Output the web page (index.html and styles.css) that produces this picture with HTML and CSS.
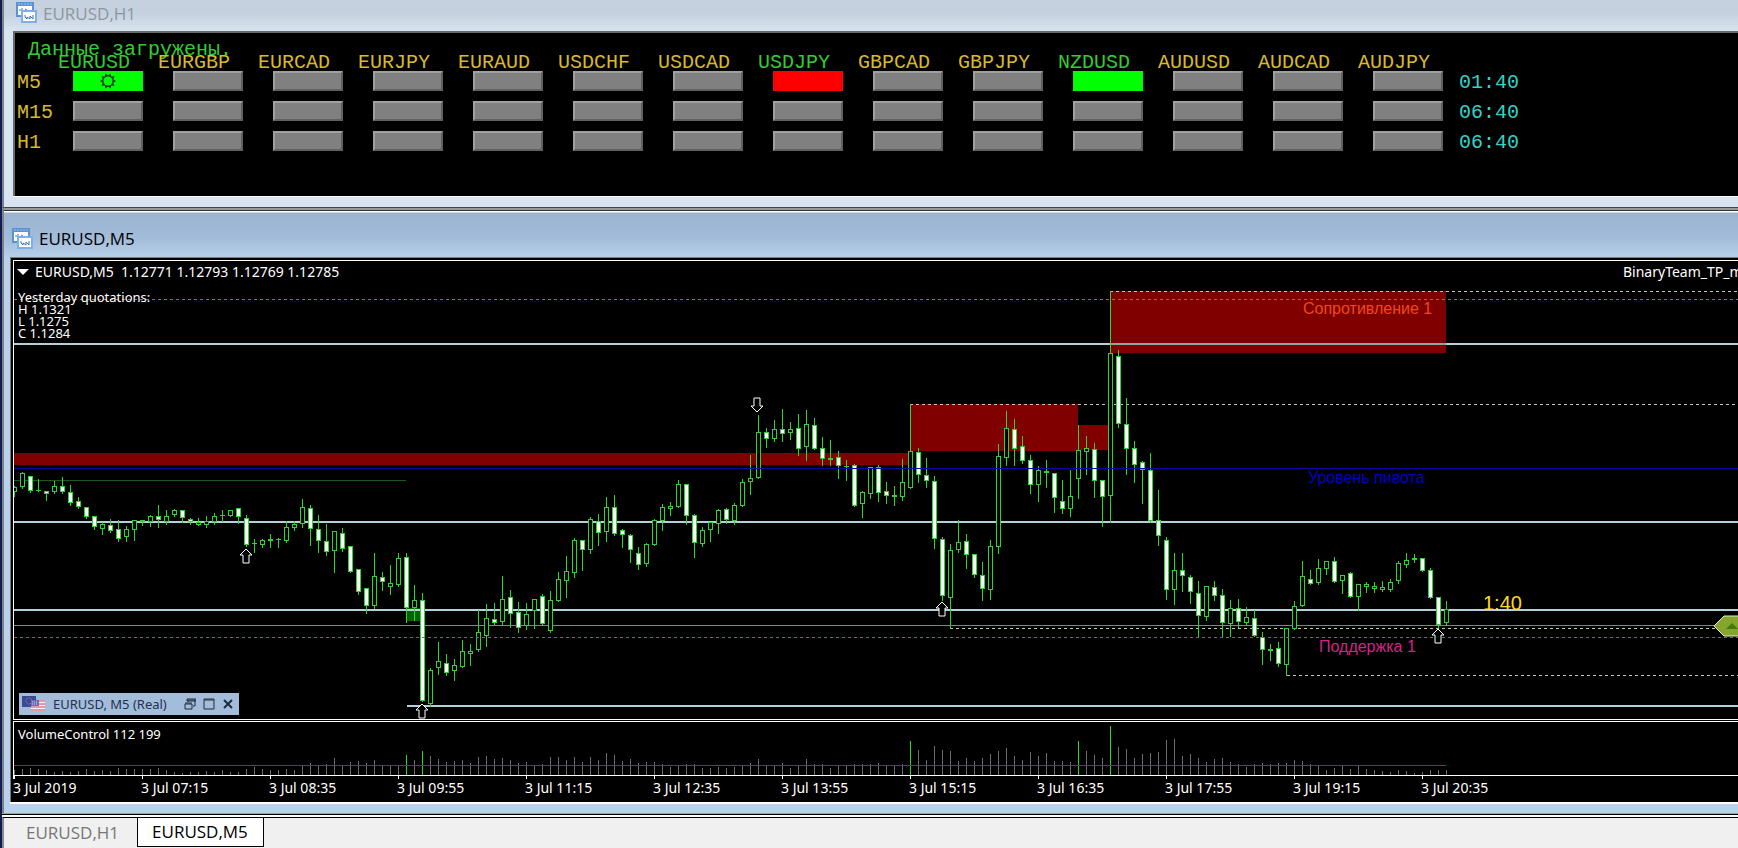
FILE: index.html
```html
<!DOCTYPE html>
<html lang="ru">
<head>
<meta charset="utf-8">
<title>EURUSD,M5</title>
<link rel="stylesheet" href="styles.css">
</head>
<body>
<svg class="defs" aria-hidden="true">
  <symbol id="win-icon" viewBox="0 0 21 21">
    <rect x="1" y="1" width="16" height="13" fill="#fff" stroke="#5b92d6" stroke-width="2"/>
    <rect x="0" y="0" width="18" height="4" fill="#5b92d6"/>
    <path d="M2 2h14" stroke="#9cc4f0" stroke-dasharray="2 1"/>
    <path d="M3 8h2M6 6v3M9 7l2 1" stroke="#3f74c4" fill="none"/>
    <rect x="6" y="9" width="14" height="11" fill="#fff" stroke="#7db0ea" stroke-width="2"/>
    <path d="M5 9h16" stroke="#7db0ea" stroke-width="2"/>
    <path d="M9 13v2l2 2v-2l3 2v-3l3 3v-4" stroke="#3d70c0" fill="none"/>
  </symbol>
</svg>

<main class="desktop">
  <section class="window inactive">
    <header class="titlebar"><svg class="win-icon"><use href="#win-icon"/></svg><h2>EURUSD,H1</h2></header>
    <div class="panel">
      <p class="status">Данные загружены.</p>
      <table class="signals">
        <thead><tr id="pairs"><td></td></tr></thead>
        <tbody id="frames"></tbody>
      </table>
    </div>
  </section>

  <section class="window active">
    <header class="titlebar"><svg class="win-icon"><use href="#win-icon"/></svg><h2>EURUSD,M5</h2></header>
    <div class="chart-frame">
      <div class="price">
        <svg class="price-plot" id="price"></svg>
        <div class="legend">
          <div class="legend-row">
            <svg class="caret" viewBox="0 0 12 6"><path d="M0 0h12L6 6z" fill="#fff"/></svg>
            <span class="ohlc">EURUSD,M5&nbsp; 1.12771 1.12793 1.12769 1.12785</span>
            <span class="expert">BinaryTeam_TP_m</span>
          </div>
          <div class="quotes">
            <div>Yesterday quotations:</div><div>H 1.1321</div><div>L 1.1275</div><div>C 1.1284</div>
          </div>
        </div>
        <div class="mini">
          <svg class="flags" viewBox="0 0 24 16">
            <rect x="0" y="0" width="14" height="11" fill="#3b4a92"/>
            <circle cx="7" cy="5" r="3" fill="none" stroke="#9a9cb8" stroke-dasharray="1 1"/>
            <rect x="9" y="4" width="14" height="11" fill="#f2f2f6"/>
            <path d="M9 5h14M9 8h14M9 11h14M9 14h14" stroke="#d2404e"/>
            <rect x="9" y="4" width="8" height="6" fill="#6a70b4"/>
            <path d="M10 6h6M10 8h6" stroke="#c8cae6" stroke-dasharray="1 1"/>
          </svg>
          <span class="mini-title">EURUSD, M5 (Real)</span>
          <button aria-label="Restore"><svg viewBox="0 0 12 12"><path d="M4 4V2h7v6H9M3 1h9v2H3zM1 6h7v5H1zM1 5h7" /></svg></button>
          <button aria-label="Maximize"><svg viewBox="0 0 12 12"><path d="M1 1h10v10H1zM1 2h10"/></svg></button>
          <button aria-label="Close"><svg viewBox="0 0 12 12"><path class="bold" d="M2 2l8 8M10 2l-8 8"/></svg></button>
        </div>
      </div>
      <div class="volume">
        <svg class="volume-plot" id="volume"></svg>
        <span class="volume-title">VolumeControl 112 199</span>
      </div>
      <div class="time-axis" id="times"></div>
    </div>
  </section>

  <nav class="tabs">
    <button class="tab">EURUSD,H1</button>
    <button class="tab current">EURUSD,M5</button>
  </nav>
</main>
<script src="chart.js"></script>
</body>
</html>
```
FILE: styles.css
```css
* { box-sizing: border-box; }
body { margin: 0; background: #f0f0f0; overflow: hidden; font-family: "Noto Sans", sans-serif; }
h2, p { margin: 0; font-weight: 400; }
button { font: inherit; margin: 0; padding: 0; border: 0; background: none; }
svg { display: block; }
.defs { position: absolute; width: 0; height: 0; }

.desktop { min-height: 100vh; display: flex; flex-direction: column; border-left: 2px solid #101c52; }
.window { border-left: 2px solid #7d8287; }
.titlebar { display: flex; align-items: center; }
.titlebar h2 { padding-top: 2px; font-family: "Open Sans", sans-serif; font-size: 17px; line-height: 24px; }
.win-icon { width: 21px; height: 21px; }

.inactive { background: #d8e4f1; border-bottom: 1px solid #444; }
.inactive .titlebar { height: 31px; padding: 0 0 6px 12px; gap: 6px; background: linear-gradient(#c5d1de 45%, #d8e4f0); }
.inactive h2 { color: #8f979f; }
.panel {
  margin: 0 0 11px 9px; padding: 6px 0 35px; background: #000; overflow: hidden;
  border: solid #696969; border-width: 2px 0 0 2px; box-shadow: 0 1px #fff;
  font-family: "Liberation Mono", monospace; font-size: 20px;
}
.status { margin: 0 0 -5px 13px; line-height: 21px; color: #32cd32; }
.signals { table-layout: fixed; border-collapse: collapse; width: 1520px; color: #d9b92c; }
.signals td, .signals th { padding: 0; font-weight: 400; text-align: left; vertical-align: top; }
.signals thead td { width: 43px; }
.signals thead th { width: 100px; height: 16px; line-height: 16px; }
.signals thead th.timer-col { width: auto; }
.signals .up { color: #32cd32; }
.signals tbody tr { height: 30px; line-height: 24px; }
.signals tbody th { padding-left: 2px; }
.signals .timer { padding-left: 1px; color: #30d5c8; }
.cell {
  display: flex; justify-content: center; align-items: center; width: 70px; height: 20px; margin-left: 15px;
  background: #808080; border: 2px solid; border-color: #a0a0a0 #606060 #606060 #a0a0a0;
}
.cell.buy { background: #0f0; border-color: #0f0; }
.cell.sell { background: #f00; border-color: #f00; }
.cell svg { width: 16px; height: 16px; }

.active {
  background: #b9d1ea; padding-bottom: 11px;
  box-shadow: 0 1px #3fc4dc, 0 2px #000, 0 4px #fff;
}
.active .titlebar {
  height: 49px; padding: 9px 0 0 8px; gap: 6px; border-top: 2px solid #999;
  background: linear-gradient(#333 1px, #fff 1px, #fff 2px, #9ab4d0 3px, #a3bcd9 60%, #b6cfea);
}
.chart-frame {
  margin-left: 6px; padding: 2px 0 0 2px; background: #000; border: solid #7b7b7b; border-width: 1px 0 0 1px;
  color: #fff; font-size: 14px; box-shadow: 0 2px #fff;
}
.price { position: relative; border: solid #fff; border-width: 1px 0 1px 1px; }
.price-plot { width: 100%; height: 458px; }
.volume { position: relative; margin-top: 1px; border: solid #fff; border-width: 1px 0 0 1px; }
.volume-plot { width: 100%; height: 57px; }
.volume-title { position: absolute; left: 4px; top: 2px; font-size: 13px; line-height: 20px; }
.time-axis { display: flex; height: 23px; line-height: 18px; overflow: hidden; }
.time-axis span { flex: 0 0 128px; white-space: nowrap; }
.legend { position: absolute; inset: 0 0 auto 0; }
.legend-row { display: flex; align-items: center; height: 21px; padding-left: 3px; }
.caret { width: 12px; height: 6px; margin-right: 6px; }
.ohlc { flex: 1; }
.expert { flex: 0 0 115px; overflow: hidden; white-space: nowrap; }
.quotes { padding: 9px 0 0 4px; font-size: 13px; line-height: 12px; }
.mini {
  position: absolute; left: 5px; bottom: 4px; display: flex; align-items: center; height: 22px; width: 220px;
  padding: 0 5px 0 3px; background: #a3bcd9; color: #1f3150; font-size: 13px;
}
.flags { width: 24px; height: 16px; margin-right: 7px; }
.mini-title { flex: 1; white-space: nowrap; }
.mini button { width: 12px; height: 12px; margin-left: 7px; }
.mini button svg { width: 12px; height: 12px; fill: none; stroke: #1c2c40; }
.mini .bold { stroke-width: 2; }

.crisp { shape-rendering: crispEdges; }
.label { font-family: "Liberation Sans", sans-serif; font-size: 16px; }
.countdown { font-family: "Liberation Sans", sans-serif; font-size: 20px; }

.tabs {
  flex: 1; display: flex; align-items: flex-start; margin-top: 4px; border-top: 1px solid #000; border-left: 2px solid #8a8a8a;
  background: #f0f0f0; font-family: "Open Sans", sans-serif; font-size: 17px;
}
.tab { height: 29px; padding: 0 18px 0 22px; color: #777; line-height: 28px; }
.tab.current { padding: 0 15px 0 14px; background: #fff; border: solid #000; border-width: 0 1px 1px; color: #000; }
```
FILE: chart.js
```js
const STEP = 8;
const PANE_TOP = 261;
const GREEN = "#32d232";

// high, body top, body bottom, low; a leading "-" marks a falling (filled) bar
const BARS = `486,487,492,496 472,473,487,488 -476,476,491,492 479,490,491,491 -491,491,494,500 481,486,492,493 -477,486,492,493 -485,492,503,505 -497,501,507,508 -507,507,517,518
-516,516,527,529 522,524,529,534 -519,525,531,532 -520,529,539,541 526,529,537,541 520,520,530,540 520,520,522,525 515,516,522,526 -505,516,520,527 510,516,522,524
509,510,515,516 -510,510,518,522 -518,519,522,524 518,522,525,525 516,521,525,527 513,516,522,524 510,515,516,521 510,510,516,516 -508,508,517,523 -515,518,545,546
539,543,544,552 539,540,545,547 534,539,541,547 538,539,540,547 521,527,541,542 521,524,528,530 499,507,524,527 -505,508,529,545 -515,529,541,552 -524,541,552,555
531,531,551,572 -528,533,549,551 -546,546,572,572 -569,569,592,594 -588,588,606,613 553,576,606,608 -572,577,582,590 565,583,587,594 553,558,585,586 -553,557,608,622
585,600,608,620 -593,600,701,701 668,670,704,706 642,661,668,674 -654,663,673,675 659,665,671,680 640,651,667,667 644,651,654,665 610,632,650,651 604,618,636,646
-603,619,623,624 576,599,622,624 -590,597,614,627 -602,612,628,632 603,614,626,629 599,599,611,628 -594,596,624,625 591,600,631,632 572,579,601,601 556,571,581,597
538,540,573,577 -540,540,550,570 517,519,550,553 -514,521,533,545 497,507,532,541 -495,507,534,535 -529,530,535,547 -534,535,550,562 -547,553,565,569 543,544,564,566
519,520,545,545 504,507,521,530 502,506,509,515 480,484,507,507 -484,484,516,524 -514,515,543,557 527,530,544,546 522,522,530,541 509,510,524,533 -508,509,520,523
503,505,521,524 479,482,506,506 455,478,482,494 415,432,478,478 -428,432,439,447 420,429,439,441 -409,429,434,441 422,429,433,439 -414,428,449,455 410,424,447,460
-418,425,449,449 -437,448,459,465 440,458,460,465 -451,457,466,478 460,466,467,480 -464,465,506,506 491,492,504,517 467,467,494,498 -465,467,493,501 -482,491,496,503
486,495,497,505 459,482,497,500 404,451,488,488 -448,452,475,482 -458,475,481,487 -476,481,539,548 -537,539,596,600 544,550,598,628 520,542,550,552 -534,541,555,568
-554,554,575,577 -562,575,589,600 540,546,590,599 444,456,547,553 411,428,458,465 -419,429,449,465 -436,446,461,463 -455,460,485,493 466,470,485,501 460,471,473,487
-473,473,498,512 -480,501,509,513 470,496,509,516 425,450,479,498 436,448,452,474 -443,449,481,497 -480,480,497,526 291,353,496,522 -350,356,424,427 -398,424,449,474
-441,448,465,482 -461,462,470,503 -453,470,521,522 -490,520,536,545 -537,540,590,599 553,570,590,604 -553,570,576,591 -575,577,592,603 -581,593,616,637 586,586,617,620
-581,587,596,600 -589,595,623,636 600,608,624,636 -599,608,622,627 607,617,623,625 -610,618,636,636 -632,637,650,664 644,649,651,660 -642,648,664,666 628,628,665,675
601,606,629,629 561,576,606,606 -570,579,584,584 559,568,583,584 561,561,569,574 -557,561,582,582 575,575,581,593 -572,573,597,597 584,584,597,610 582,584,587,592
582,586,589,592 581,587,590,591 579,582,590,591 561,563,581,583 553,560,565,567 554,558,560,562 -558,558,571,571 -568,570,598,598 -597,597,625,627 601,609,623,625`;

const VOLUMES = [
  5,6,7,6,5,3,4,3,4,6,4,5,4,7,6,6,6,6,7,5,3,2,3,3,4,3,5,3,3,6,8,6,5,5,6,5,9,12,9,11,17,9,13,14,12,15,9,9,9,20,
  15,24,19,16,13,14,15,12,18,19,16,17,15,12,13,9,11,18,18,15,18,13,18,15,22,20,14,16,12,13,13,11,8,9,11,11,7,7,8,7,
  8,9,12,16,9,9,12,7,9,16,11,11,7,9,9,11,11,11,12,9,9,11,34,25,15,29,25,24,14,17,14,17,21,24,27,19,15,23,19,22,
  14,14,13,34,24,20,17,49,28,26,17,21,22,23,35,36,19,21,17,13,16,17,13,11,8,11,12,11,12,12,15,14,11,9,5,7,9,6,9,6,
  5,4,3,5,4,2,3,5,5,5
];
const SPIKES = new Set([49, 51, 112, 133, 137]);

const rect = (x, y, w, h, fill) => `<rect x="${x}" y="${y}" width="${w}" height="${h}" fill="${fill}"/>`;
const level = (x, y, color, dash) =>
  `<svg x="${x}" y="${y - PANE_TOP}" width="100%" height="2"><path d="M0 1H4000" stroke="${color}" stroke-width="2"${dash ? ` stroke-dasharray="3 3"` : ""}/></svg>`;
const thin = (x, y, color, dash) => level(x, y, color, dash).replace('height="2"', 'height="1"');

function priceMarkup() {
  let s = `<g class="crisp">`;
  const box = (x1, y1, x2, y2, c) => rect(x1, y1 - PANE_TOP, x2 - x1, y2 - y1, c);
  s += box(0, 453, 894, 465, "#800000") + box(896, 404, 1064, 451, "#800000");
  s += box(1064, 425, 1095, 450, "#800000") + box(1096, 291, 1432, 353, "#800000");
  s += box(393, 608, 407, 621, "#006400");
  s += level(0, 343, "#b4d0d8") + level(0, 521, "#b4d0d8") + level(0, 609, "#b4d0d8") + level(393, 705, "#b4d0d8");
  s += box(1096, 343, 1432, 345, "#8aa4a8");
  s += rect(0, 480 - PANE_TOP, 392, 1, "#1a5a1a");
  s += thin(0, 625, "#7f9150");
  s += thin(896, 404, "#c4c4c4", true) + thin(1096, 291, "#c4c4c4", true);
  s += thin(936, 628, "#c4c4c4", true) + thin(1273, 675, "#c4c4c4", true);
  BARS.split(/\s+/).forEach((bar, i) => {
    const filled = bar[0] === "-";
    const [hi, top, bottom, lo] = bar.replace("-", "").split(",").map(v => Number(v) - PANE_TOP);
    const x = i * STEP;
    s += rect(x, hi, 1, lo - hi + 1, GREEN);
    s += rect(x - 2, top, 5, Math.max(1, bottom - top), GREEN);
    if (bottom - top > 2) s += rect(x - 1, top + 1, 3, bottom - top - 2, filled ? "#fff" : "#000");
  });
  s += thin(0, 468, "#0a0aa8") + thin(0, 299, "#d05a34", true) + thin(0, 637, "#c83c70", true);
  s += `</g>`;
  const arrow = (x, y, down) =>
    `<path transform="translate(${x} ${y - PANE_TOP})${down ? " scale(1 -1)" : ""}" d="M0 0L6 6H3V14H-3V6H-6Z" fill="#000" stroke="#fff"/>`;
  s += arrow(232, 549) + arrow(408, 704) + arrow(928, 602) + arrow(1424, 629) + arrow(743, 412, true);
  const label = (x, y, c, t, cls = "label") => `<text class="${cls}" x="${x}" y="${y - PANE_TOP}" fill="${c}">${t}</text>`;
  s += label(1289, 314, "#f04818", "Сопротивление 1") + label(1294, 483, "#0000c0", "Уровень пивота");
  s += label(1305, 652, "#d82088", "Поддержка 1") + label(1469, 610, "#ffd91a", "1:40", "countdown");
  s += `<svg x="100%" y="${615 - PANE_TOP}" overflow="visible"><path d="M2 1H-14L-24 11L-14 21H2Z" fill="#86a52c" stroke="#e8ecd0"/><path d="M-12 14L-6 8L0 14Z" fill="#3f7a0c"/></svg>`;
  return s;
}

function volumeMarkup() {
  let s = `<g class="crisp">`;
  VOLUMES.forEach((v, i) => { s += rect(i * STEP, 53 - v, 1, v, SPIKES.has(i) ? GREEN : "#6c6c6c"); });
  s += rect(0, 43, 1432, 1, "#b01c1c") + rect(0, 53, "100%", 1, "#fff");
  for (let x = 0; x <= 1408; x += 128) s += rect(x, 54, 1, 3, "#fff");
  return s + `</g>`;
}

document.getElementById("price").innerHTML = priceMarkup();
document.getElementById("volume").innerHTML = volumeMarkup();
document.getElementById("times").innerHTML =
  ["2019", "07:15", "08:35", "09:55", "11:15", "12:35", "13:55", "15:15", "16:35", "17:55", "19:15", "20:35"]
    .map(t => `<span>3 Jul ${t}</span>`).join("");

const PAIRS = ["EURUSD", "EURGBP", "EURCAD", "EURJPY", "EURAUD", "USDCHF", "USDCAD", "USDJPY", "GBPCAD", "GBPJPY", "NZDUSD", "AUDUSD", "AUDCAD", "AUDJPY"];
const SIGNALS = { EURUSD: "buy", USDJPY: "sell", NZDUSD: "buy" };
const rays = Array.from({ length: 20 }, (_, i) => {
  const r = i % 2 ? 5.5 : 8, a = Math.PI * i / 10;
  return `${(8 + r * Math.cos(a)).toFixed(1)},${(8 + r * Math.sin(a)).toFixed(1)}`;
}).join(" ");
const SUN = `<svg viewBox="0 0 16 16"><polygon points="${rays}" fill="#063806"/><circle cx="8" cy="8" r="4.6" fill="#0f0"/></svg>`;
document.getElementById("pairs").innerHTML +=
  PAIRS.map(p => `<th scope="col" class="${SIGNALS[p] === "sell" || SIGNALS[p] ? "up" : ""}">${p}</th>`).join("") + `<th class="timer-col"></th>`;
document.getElementById("frames").innerHTML = [["M5", "01:40"], ["M15", "06:40"], ["H1", "06:40"]].map(([frame, timer], row) =>
  `<tr><th scope="row">${frame}</th>` +
  PAIRS.map(p => {
    const signal = row === 0 && SIGNALS[p] || "";
    return `<td><button class="cell ${signal}" aria-label="${p} ${frame}">${row === 0 && p === "EURUSD" ? SUN : ""}</button></td>`;
  }).join("") + `<td class="timer">${timer}</td></tr>`).join("");
```
